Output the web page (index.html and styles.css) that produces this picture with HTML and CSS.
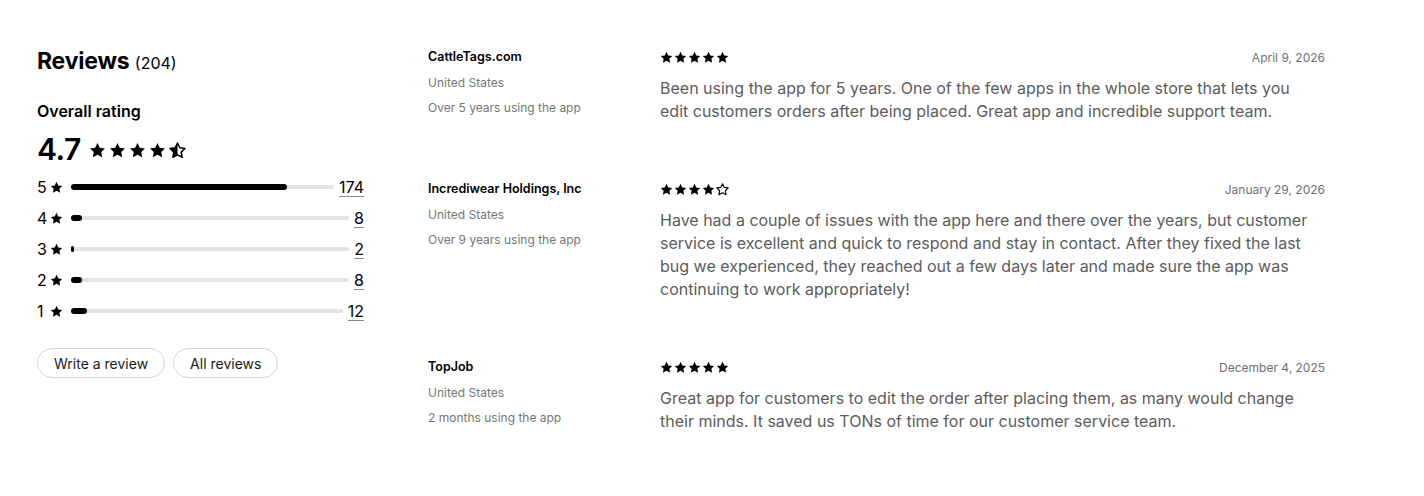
FILE: index.html
```html
<!DOCTYPE html>
<html lang="en">
<head>
    <meta charset="UTF-8">
    <meta name="viewport" content="width=device-width, initial-scale=1.0">
    <title>Reviews</title>
    <link rel="stylesheet" href="styles.css">
</head>
<body>
    <svg class="defs" width="0" height="0" aria-hidden="true">
        <defs>
            <path id="star" d="M10 1.2l2.7 5.6 6.1.8-4.4 4.3 1.1 6.1L10 15.1l-5.5 2.9 1.1-6.1-4.4-4.3 6.1-.8z"/>
            <clipPath id="half"><rect x="0" y="0" width="10" height="20"/></clipPath>
        </defs>
    </svg>

    <div class="layout">
        <!-- Summary column -->
        <aside class="summary">
            <h2 class="title">Reviews <span class="total">(204)</span></h2>
            <h3 class="subtitle">Overall rating</h3>
            <div class="overall">
                <span class="score">4.7</span>
                <span class="stars stars-lg">
                    <svg viewBox="0 0 20 20"><use href="#star"/></svg>
                    <svg viewBox="0 0 20 20"><use href="#star"/></svg>
                    <svg viewBox="0 0 20 20"><use href="#star"/></svg>
                    <svg viewBox="0 0 20 20"><use href="#star"/></svg>
                    <svg viewBox="0 0 20 20"><use href="#star" class="outline"/><use href="#star" clip-path="url(#half)"/></svg>
                </span>
            </div>

            <ul class="bars">
                <li class="bar-row">
                    <span class="bar-label">5</span>
                    <svg class="bar-star" viewBox="0 0 20 20"><use href="#star"/></svg>
                    <span class="track"><span class="fill" style="width: 82%"></span></span>
                    <a class="count" href="#">174</a>
                </li>
                <li class="bar-row">
                    <span class="bar-label">4</span>
                    <svg class="bar-star" viewBox="0 0 20 20"><use href="#star"/></svg>
                    <span class="track"><span class="fill" style="width: 3.9%"></span></span>
                    <a class="count" href="#">8</a>
                </li>
                <li class="bar-row">
                    <span class="bar-label">3</span>
                    <svg class="bar-star" viewBox="0 0 20 20"><use href="#star"/></svg>
                    <span class="track"><span class="fill" style="width: 1%"></span></span>
                    <a class="count" href="#">2</a>
                </li>
                <li class="bar-row">
                    <span class="bar-label">2</span>
                    <svg class="bar-star" viewBox="0 0 20 20"><use href="#star"/></svg>
                    <span class="track"><span class="fill" style="width: 3.9%"></span></span>
                    <a class="count" href="#">8</a>
                </li>
                <li class="bar-row">
                    <span class="bar-label">1</span>
                    <svg class="bar-star" viewBox="0 0 20 20"><use href="#star"/></svg>
                    <span class="track"><span class="fill" style="width: 5.9%"></span></span>
                    <a class="count" href="#">12</a>
                </li>
            </ul>

            <div class="actions">
                <button class="pill">Write a review</button>
                <button class="pill">All reviews</button>
            </div>
        </aside>

        <!-- Review list -->
        <section class="reviews">
            <article class="review">
                <div class="meta">
                    <div class="shop">CattleTags.com</div>
                    <div class="muted">United States</div>
                    <div class="muted">Over 5 years using the app</div>
                </div>
                <div class="body">
                    <div class="body-head">
                        <span class="stars stars-sm">
                            <svg viewBox="0 0 20 20"><use href="#star"/></svg>
                            <svg viewBox="0 0 20 20"><use href="#star"/></svg>
                            <svg viewBox="0 0 20 20"><use href="#star"/></svg>
                            <svg viewBox="0 0 20 20"><use href="#star"/></svg>
                            <svg viewBox="0 0 20 20"><use href="#star"/></svg>
                        </span>
                        <span class="date">April 9, 2026</span>
                    </div>
                    <p class="text">Been using the app for 5 years. One of the few apps in the whole store that lets you edit customers orders after being placed. Great app and incredible support team.</p>
                </div>
            </article>

            <article class="review">
                <div class="meta">
                    <div class="shop">Incrediwear Holdings, Inc</div>
                    <div class="muted">United States</div>
                    <div class="muted">Over 9 years using the app</div>
                </div>
                <div class="body">
                    <div class="body-head">
                        <span class="stars stars-sm">
                            <svg viewBox="0 0 20 20"><use href="#star"/></svg>
                            <svg viewBox="0 0 20 20"><use href="#star"/></svg>
                            <svg viewBox="0 0 20 20"><use href="#star"/></svg>
                            <svg viewBox="0 0 20 20"><use href="#star"/></svg>
                            <svg viewBox="0 0 20 20"><use href="#star" class="outline"/></svg>
                        </span>
                        <span class="date">January 29, 2026</span>
                    </div>
                    <p class="text">Have had a couple of issues with the app here and there over the years, but customer service is excellent and quick to respond and stay in contact. After they fixed the last bug we experienced, they reached out a few days later and made sure the app was continuing to work appropriately!</p>
                </div>
            </article>

            <article class="review">
                <div class="meta">
                    <div class="shop">TopJob</div>
                    <div class="muted">United States</div>
                    <div class="muted">2 months using the app</div>
                </div>
                <div class="body">
                    <div class="body-head">
                        <span class="stars stars-sm">
                            <svg viewBox="0 0 20 20"><use href="#star"/></svg>
                            <svg viewBox="0 0 20 20"><use href="#star"/></svg>
                            <svg viewBox="0 0 20 20"><use href="#star"/></svg>
                            <svg viewBox="0 0 20 20"><use href="#star"/></svg>
                            <svg viewBox="0 0 20 20"><use href="#star"/></svg>
                        </span>
                        <span class="date">December 4, 2025</span>
                    </div>
                    <p class="text">Great app for customers to edit the order after placing them, as many would change their minds. It saved us TONs of time for our customer service team.</p>
                </div>
            </article>
        </section>
    </div>
</body>
</html>
```

FILE: styles.css
```css
/* Base */
body {
    margin: 0;
    font-family: Inter, "Noto Sans", sans-serif;
    color: #000;
    background: #fff;
}

.defs {
    position: absolute;
}

.layout {
    display: flex;
    padding: 45px 99px 40px 37px;
    gap: 64px;
}

/* Summary column */
.summary {
    width: 327px;
    flex-shrink: 0;
}

.title {
    margin: 0;
    font-size: 23px;
    line-height: 32px;
    font-weight: 700;
    letter-spacing: -0.2px;
}

.total {
    font-size: 16px;
    font-weight: 400;
    letter-spacing: 0;
}

.subtitle {
    margin: 20px 0 0;
    font-size: 16px;
    line-height: 24px;
    font-weight: 600;
}

.overall {
    display: flex;
    align-items: center;
    gap: 8px;
    margin-top: 7px;
}

.score {
    font-size: 30px;
    line-height: 38px;
    font-weight: 600;
    letter-spacing: -0.5px;
}

.stars {
    display: inline-flex;
}

.stars svg {
    fill: #000;
}

.stars .outline {
    fill: #fff;
    stroke: #000;
    stroke-width: 1.8;
    stroke-linejoin: round;
}

.stars-lg {
    gap: 3px;
    margin-top: 3px;
}

.stars-lg svg {
    width: 17px;
    height: 17px;
}

.stars-sm {
    gap: 1px;
}

.stars-sm svg {
    width: 13px;
    height: 13px;
}

/* Rating breakdown */
.bars {
    list-style: none;
    margin: 3px 0 0;
    padding: 0;
}

.bar-row {
    display: flex;
    align-items: center;
    height: 31px;
    font-size: 16px;
}

.bar-label {
    width: 10px;
}

.bar-star {
    width: 13px;
    height: 13px;
    margin: 2px 8px 0 3px;
    fill: #000;
}

.track {
    flex: 1;
    height: 4px;
    border-radius: 2px;
    background: #e3e3e3;
    display: flex;
    align-items: center;
    margin-right: 5px;
}

.fill {
    height: 6px;
    min-width: 2px;
    border-radius: 3px;
    background: #000;
}

.count {
    color: #000;
    text-decoration: underline;
    text-decoration-color: #8a8a8a;
    text-underline-offset: 3px;
}

.actions {
    display: flex;
    gap: 8px;
    margin-top: 22px;
}

.pill {
    font-family: inherit;
    font-size: 14px;
    color: #1a1a1a;
    background: #fff;
    border: 1px solid #d4d4d4;
    border-radius: 16px;
    height: 30px;
    padding: 0 16px;
    cursor: pointer;
}

/* Reviews */
.reviews {
    flex: 1;
    display: flex;
    flex-direction: column;
    gap: 56px;
    padding-top: 2px;
}

.review {
    display: flex;
}

.meta {
    width: 232px;
    flex-shrink: 0;
    font-size: 12px;
    line-height: 20px;
}

.shop {
    font-size: 12.5px;
    font-weight: 600;
    color: #000;
    margin-bottom: 6px;
}

.muted {
    color: #767676;
    margin-bottom: 5px;
}

.body {
    flex: 1;
}

.body-head {
    display: flex;
    justify-content: space-between;
    align-items: center;
    height: 20px;
}

.date {
    font-size: 12px;
    color: #6f6f6f;
}

.text {
    margin: 10px 0 0;
    padding-right: 14px;
    font-size: 16px;
    line-height: 23px;
    color: #5c5c5c;
}
```
